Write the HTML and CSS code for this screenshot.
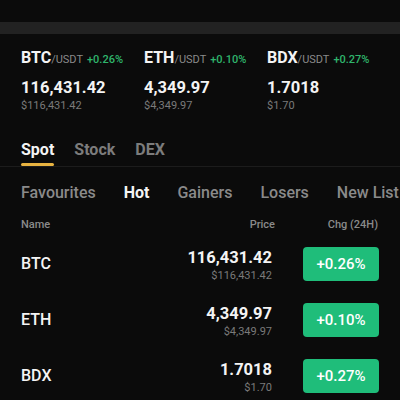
FILE: index.html
```html
<!DOCTYPE html>
<html>
<head>
<meta charset="utf-8">
<link rel="stylesheet" href="styles.css">
</head>
<body>
<div class="topbar"></div>
<div class="tickers">
  <div class="ticker">
    <div class="pair"><span class="base">BTC</span><span class="quote">/USDT</span><span class="chg">+0.26%</span></div>
    <div class="tprice">116,431.42</div>
    <div class="tusd">$116,431.42</div>
  </div>
  <div class="ticker">
    <div class="pair"><span class="base">ETH</span><span class="quote">/USDT</span><span class="chg">+0.10%</span></div>
    <div class="tprice">4,349.97</div>
    <div class="tusd">$4,349.97</div>
  </div>
  <div class="ticker">
    <div class="pair"><span class="base">BDX</span><span class="quote">/USDT</span><span class="chg">+0.27%</span></div>
    <div class="tprice">1.7018</div>
    <div class="tusd">$1.70</div>
  </div>
</div>
<div class="tabs">
  <div class="tab active">Spot</div>
  <div class="tab">Stock</div>
  <div class="tab">DEX</div>
</div>
<div class="subtabs">
  <div class="subtab">Favourites</div>
  <div class="subtab active">Hot</div>
  <div class="subtab">Gainers</div>
  <div class="subtab">Losers</div>
  <div class="subtab">New List</div>
</div>
<div class="header">
  <div class="h-name">Name</div>
  <div class="h-price">Price</div>
  <div class="h-chg">Chg (24H)</div>
</div>
<div class="list">
  <div class="row">
    <div class="name">BTC</div>
    <div class="price"><div class="p">116,431.42</div><div class="usd">$116,431.42</div></div>
    <div class="badge">+0.26%</div>
  </div>
  <div class="row">
    <div class="name">ETH</div>
    <div class="price"><div class="p">4,349.97</div><div class="usd">$4,349.97</div></div>
    <div class="badge">+0.10%</div>
  </div>
  <div class="row">
    <div class="name">BDX</div>
    <div class="price"><div class="p">1.7018</div><div class="usd">$1.70</div></div>
    <div class="badge">+0.27%</div>
  </div>
</div>
</body>
</html>
```

FILE: styles.css
```css
html, body {
  margin: 0;
  padding: 0;
  background: #0b0b0b;
  color: #f2f2f2;
  font-family: Roboto, "Liberation Sans", sans-serif;
  width: 400px;
  height: 400px;
  overflow: hidden;
}

.topbar {
  margin-top: 22px;
  height: 12px;
  background: #222222;
}

.tickers {
  display: flex;
  padding: 14px 0 0 21px;
}

.ticker {
  width: 123px;
  flex: none;
}

.pair {
  line-height: 20px;
  white-space: nowrap;
}

.base {
  font-size: 16px;
  font-weight: 700;
  color: #f4f4f4;
}

.quote {
  font-size: 11px;
  color: #8a8a8a;
}

.chg {
  font-size: 11px;
  font-weight: 500;
  color: #2fb56c;
  margin-left: 4px;
}

.tprice {
  margin-top: 7px;
  font-size: 16.5px;
  line-height: 22px;
  font-weight: 700;
  color: #f4f4f4;
}

.tusd {
  font-size: 11px;
  line-height: 14px;
  color: #7a7a7a;
}

.tabs {
  display: flex;
  gap: 20px;
  padding: 27px 21px 0 21px;
  border-bottom: 1px solid #1c1c1c;
}

.tab {
  font-size: 16px;
  line-height: 20px;
  font-weight: 700;
  color: #7c7c7c;
}

.tab::after {
  content: "";
  display: block;
  height: 3px;
  margin-top: 3px;
  border-radius: 2px;
  background: transparent;
}

.tab.active {
  color: #f4f4f4;
}

.tab.active::after {
  background: #e8b341;
}

.subtabs {
  display: flex;
  gap: 28px;
  padding: 16px 0 0 21px;
  white-space: nowrap;
}

.subtab {
  font-size: 16px;
  line-height: 20px;
  font-weight: 500;
  color: #8a8a8a;
  flex: none;
}

.subtab.active {
  color: #f4f4f4;
  font-weight: 700;
}

.header {
  display: grid;
  grid-template-columns: 1fr auto 76px;
  column-gap: 28px;
  padding: 15px 21px 0 21px;
  font-size: 11px;
  line-height: 14px;
  font-weight: 500;
  color: #8a8a8a;
}

.h-price {
  text-align: right;
}

.h-chg {
  text-align: right;
  padding-right: 1px;
}

.list {
  padding-top: 4px;
}

.row {
  display: grid;
  grid-template-columns: 1fr auto 76px;
  column-gap: 31px;
  align-items: center;
  height: 56px;
  padding: 0 21px;
}

.name {
  font-size: 16px;
  line-height: 20px;
  font-weight: 500;
  color: #f4f4f4;
}

.price {
  text-align: right;
}

.p {
  font-size: 16.5px;
  line-height: 22px;
  font-weight: 700;
  color: #f4f4f4;
}

.usd {
  font-size: 11px;
  line-height: 13px;
  color: #7a7a7a;
}

.badge {
  height: 34px;
  border-radius: 4px;
  background: #1fbd7a;
  color: #ffffff;
  font-size: 15px;
  font-weight: 500;
  display: flex;
  align-items: center;
  justify-content: center;
}
```
